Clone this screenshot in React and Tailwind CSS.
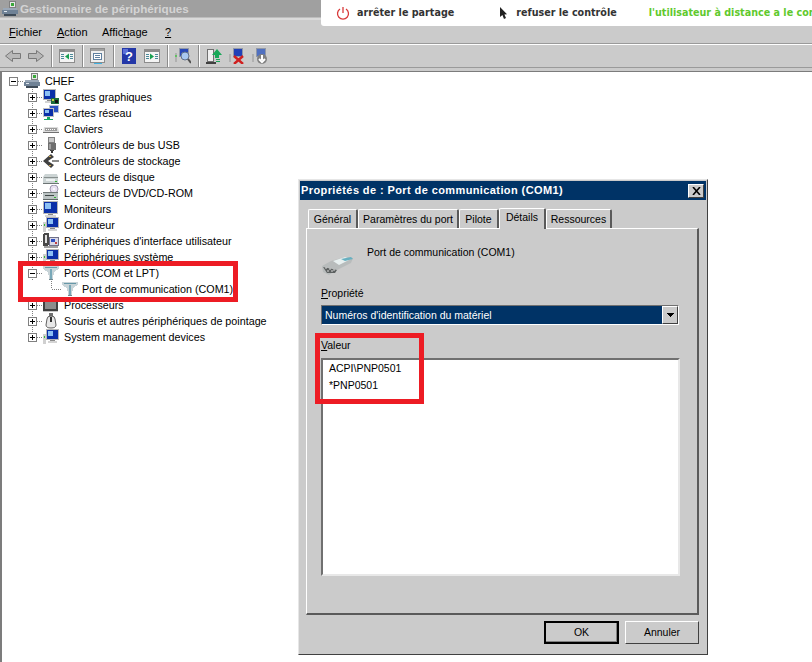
const F = { fontFamily: '"Liberation Sans", Arial, sans-serif' };

const Px = ({ children, w = 16, h = 16, className = "" }) => (
  <svg width={w} height={h} viewBox={`0 0 ${w} ${h}`} shapeRendering="crispEdges" className={`shrink-0 ${className}`}>{children}</svg>
);

const Monitor = ({ x = 2, y = 0 }) => (
  <g transform={`translate(${x} ${y})`}>
    <rect x="0" y="0" width="13" height="11" fill="#b8b8b8" />
    <rect x="1" y="1" width="11" height="9" fill="#0a2fa8" />
    <rect x="2" y="2" width="5" height="5" fill="#8cc0f4" />
    <rect x="4" y="11" width="5" height="1" fill="#8a8a8a" />
    <rect x="2" y="12" width="9" height="2" fill="#d4d4d4" />
  </g>
);

const Icons = {
  computer: () => (<Px>
    <rect x="7.5" y="0.5" width="6" height="6" fill="#e8e8e8" stroke="#808080" />
    <rect x="9" y="2" width="3" height="3" fill="#3aa83a" />
    <rect x="1" y="7" width="14" height="2" fill="#9aa8b8" />
    <rect x="0" y="9" width="16" height="4" fill="#6f8296" />
    <rect x="2" y="13" width="12" height="2" fill="#3e4b58" />
    <rect x="2" y="10" width="3" height="1" fill="#e0e8f0" />
  </Px>),
  display: () => (<Px><Monitor x={0} y={0} /><rect x="8" y="9" width="8" height="6" fill="#1c6b3a" /><rect x="9" y="10" width="2" height="2" fill="#c8d048" /><rect x="12" y="11" width="3" height="3" fill="#101010" /></Px>),
  network: () => (<Px><rect x="6" y="0" width="10" height="8" fill="#b8c4d8" /><rect x="7" y="1" width="8" height="6" fill="#2a52c0" /><rect x="0" y="3" width="11" height="9" fill="#c0c0c0" /><rect x="1" y="4" width="9" height="7" fill="#0a2fa8" /><rect x="2" y="5" width="4" height="3" fill="#8fc0f0" /><rect x="4" y="12" width="3" height="2" fill="#18a860" /><rect x="1" y="14" width="9" height="1" fill="#18a860" /></Px>),
  keyboard: () => (<Px><path d="M1 6 L15 6 L16 11 L0 11 Z" fill="#dcdcdc" shapeRendering="auto" /><rect x="2" y="7" width="12" height="3" fill="#9c9c9c" /><rect x="3" y="8" width="1" height="1" fill="#fff" /><rect x="5" y="8" width="1" height="1" fill="#fff" /><rect x="7" y="8" width="1" height="1" fill="#fff" /><rect x="9" y="8" width="1" height="1" fill="#fff" /><rect x="11" y="8" width="1" height="1" fill="#fff" /><rect x="0" y="11" width="16" height="1" fill="#707070" /></Px>),
  usb: () => (<Px><rect x="5.5" y="0.5" width="6" height="5" fill="#c8c8c8" stroke="#808080" /><rect x="5" y="6" width="8" height="7" fill="#6e6e6e" /><rect x="6" y="7" width="2" height="5" fill="#a0a0a0" /><rect x="7" y="13" width="4" height="1" fill="#444" /><rect x="8" y="14" width="2" height="2" fill="#333" /></Px>),
  storage: () => (<Px><path d="M8 1 L0 8 L8 15 L11 12 L5 8 L11 4 Z" fill="#404040" shapeRendering="auto" /><rect x="9" y="7" width="7" height="2" fill="#8a8a8a" /><rect x="6" y="3" width="2" height="1" fill="#c8a040" /><rect x="6" y="12" width="2" height="1" fill="#c8a040" /></Px>),
  disk: () => (<Px><path d="M2 5 H14 L15 8 V14 H0 V8 Z" fill="#ccd4d4" shapeRendering="auto" /><rect x="1" y="8" width="14" height="1" fill="#88908f" /><rect x="3" y="10" width="9" height="2" fill="#eef2f2" /><rect x="12" y="12" width="2" height="1" fill="#30b030" /><rect x="0" y="14" width="16" height="1" fill="#6c7474" /></Px>),
  dvd: () => (<Px><circle cx="11" cy="4" r="4" fill="#e8e0f0" stroke="#a098b0" shapeRendering="auto" /><circle cx="11" cy="4" r="1" fill="#fff" shapeRendering="auto" /><rect x="0" y="7" width="15" height="8" fill="#bcc4c4" /><rect x="0" y="7" width="15" height="1" fill="#707878" /><rect x="2" y="10" width="9" height="1" fill="#404848" /><rect x="11" y="12" width="2" height="1" fill="#30b030" /><rect x="0" y="14" width="15" height="1" fill="#606868" /></Px>),
  monitor: () => (<Px w={16} h={16}><g transform="scale(1.15)"><Monitor x={0} y={0} /></g></Px>),
  computer2: () => (<Px><rect x="0" y="5" width="3" height="10" fill="#d0d0d0" /><rect x="1" y="7" width="1" height="2" fill="#30c030" /><Monitor x={3} y={0} /></Px>),
  hid: () => (<Px><rect x="0" y="0" width="6" height="13" rx="2" fill="#484848" /><rect x="2" y="2" width="2" height="8" fill="#e0e0e0" /><rect x="6.5" y="4.5" width="9" height="8" fill="#d8d8e8" stroke="#707088" /><rect x="8" y="6" width="4" height="3" fill="#3050c0" /><rect x="12" y="9" width="2" height="2" fill="#c04040" /><rect x="1" y="13" width="14" height="2" fill="#a0a0a0" /></Px>),
  port: () => (<Px><path d="M0 1 H16 V4 L11 7 V10 H10 V14 H6 V10 H5 V7 L0 4 Z" fill="#c8d4d8" /><path d="M2 2 H14 V3 H2 Z" fill="#6898a8" /><rect x="7" y="4" width="2" height="10" fill="#78a8b8" /><rect x="6" y="14" width="4" height="1" fill="#708890" /></Px>),
  cpu: () => (<Px><rect x="0" y="0" width="15" height="15" fill="#404040" /><rect x="2" y="2" width="11" height="10" fill="#8c8c8c" /><rect x="3" y="3" width="9" height="1" fill="#b8b8b8" /><rect x="0" y="14" width="15" height="1" fill="#c8c8c8" /></Px>),
  mouse: () => (<Px><rect x="6" y="0" width="4" height="3" fill="#707070" /><path d="M4 6 Q4 3 8 3 Q12 3 12 6 L13 12 Q13 15 8 15 Q3 15 3 12 Z" fill="#e8e8e8" stroke="#606060" shapeRendering="auto" /><rect x="7" y="4" width="2" height="5" fill="#303030" /></Px>),
};

const TB = {
  back: () => (<Px><path d="M0.5 8 L7.5 2.5 V5.5 H15.5 V10.5 H7.5 V13.5 Z" fill="#b8b8b8" stroke="#787878" shapeRendering="auto" /></Px>),
  fwd: () => (<Px><path d="M15.5 8 L8.5 2.5 V5.5 H0.5 V10.5 H8.5 V13.5 Z" fill="#b8b8b8" stroke="#787878" shapeRendering="auto" /></Px>),
  pane: ({ arrow }) => (<Px><rect x="0.5" y="1.5" width="15" height="13" fill="#f4f4f4" stroke="#8c8c8c" /><rect x="1" y="2" width="14" height="2" fill="#8c8c8c" /><rect x="2" y="6" width="3" height="1" fill="#4a8a9a" /><rect x="2" y="8" width="3" height="1" fill="#4a8a9a" /><rect x="2" y="10" width="3" height="1" fill="#4a8a9a" /><rect x="11" y="6" width="3" height="1" fill="#4a8a9a" /><rect x="11" y="8" width="3" height="1" fill="#4a8a9a" /><rect x="11" y="10" width="3" height="1" fill="#4a8a9a" />{arrow === "l" ? <path d="M6 8.5 L10 5.5 V11.5 Z" fill="#18a050" shapeRendering="auto" /> : <path d="M10 8.5 L6 5.5 V11.5 Z" fill="#18a050" shapeRendering="auto" />}</Px>),
  doc: () => (<Px><rect x="0.5" y="0.5" width="14" height="14" fill="#f0f0f0" stroke="#8c8c8c" /><rect x="1" y="1" width="13" height="2" fill="#a0a0a0" /><rect x="3.5" y="5.5" width="8" height="6" fill="#fff" stroke="#6080a0" /><rect x="5" y="7" width="5" height="1" fill="#6080a0" /><rect x="5" y="9" width="5" height="1" fill="#6080a0" /><rect x="4" y="15" width="8" height="1" fill="#40b0e0" /></Px>),
  help: () => (<svg width="14" height="16" viewBox="0 0 14 16" className="shrink-0"><rect width="14" height="16" fill="#2438a8" /><rect x="1" y="1" width="5" height="5" fill="#5c70d8" /><text x="7" y="13" textAnchor="middle" fontSize="13" fontWeight="700" fill="#fff" style={F}>?</text></svg>),
  scan: () => (<Px><rect x="0" y="5" width="2" height="9" fill="#b0b0b0" /><rect x="0" y="7" width="2" height="2" fill="#60c060" /><rect x="4.5" y="0.5" width="9" height="8" fill="#2848b8" stroke="#9098a8" /><circle cx="10" cy="8" r="4" fill="#a8c8f0" stroke="#607088" shapeRendering="auto" /><path d="M13 11 L16 15" stroke="#505050" strokeWidth="2" shapeRendering="auto" /></Px>),
  update: () => (<Px><rect x="1.5" y="1.5" width="6" height="12" fill="#f0f0f0" stroke="#707070" /><rect x="0" y="14" width="10" height="2" fill="#404040" /><path d="M11 1 L16 7 H13 V10 H9 V7 H6 Z" fill="#18a858" shapeRendering="auto" /><rect x="10" y="11" width="4" height="1" fill="#18a858" /><rect x="10" y="13" width="4" height="1" fill="#18a858" /></Px>),
  remove: () => (<Px><rect x="0" y="6" width="2" height="8" fill="#b0b0b0" /><rect x="4.5" y="0.5" width="9" height="8" fill="#2040b8" stroke="#9098a8" /><path d="M5 8 L14 16 M14 8 L5 16" stroke="#d02020" strokeWidth="2.4" shapeRendering="auto" /></Px>),
  install: () => (<Px><rect x="0" y="6" width="2" height="8" fill="#b0b0b0" /><rect x="4.5" y="0.5" width="9" height="8" fill="#5070c0" stroke="#9098a8" /><circle cx="10" cy="11" r="5" fill="#808080" shapeRendering="auto" /><path d="M10 7 V12 M7 11 L10 14 L13 11" stroke="#fff" strokeWidth="2" fill="none" shapeRendering="auto" /></Px>),
};

const Conn = ({ box, top = true, bottom = true, minus, w = 19, bx = 4 }) => (
  <svg width={w} height="16" viewBox={`0 0 ${w} 16`} shapeRendering="crispEdges" className="shrink-0">
    <path d={`M${bx + 4.5} ${top ? 0 : 8}V${bottom ? 16 : 8}`} stroke="#808080" strokeDasharray="1 1" fill="none" />
    <path d={`M${bx + 5} 8.5H${w}`} stroke="#808080" strokeDasharray="1 1" fill="none" />
    {box && <>
      <rect x={bx + 0.5} y="4.5" width="8" height="8" fill="#fff" stroke="#808080" />
      <rect x={bx + 2} y="8" width="5" height="1" fill="#000" />
      {!minus && <rect x={bx + 4} y="6" width="1" height="5" fill="#000" />}
    </>}
  </svg>
);

const items = [
  ["display", "Cartes graphiques"], ["network", "Cartes réseau"], ["keyboard", "Claviers"],
  ["usb", "Contrôleurs de bus USB"], ["storage", "Contrôleurs de stockage"], ["disk", "Lecteurs de disque"],
  ["dvd", "Lecteurs de DVD/CD-ROM"], ["monitor", "Moniteurs"], ["computer2", "Ordinateur"],
  ["hid", "Périphériques d'interface utilisateur"], ["computer2", "Périphériques système"],
];
const items2 = [["cpu", "Processeurs"], ["mouse", "Souris et autres périphériques de pointage"], ["computer2", "System management devices"]];

const Row = ({ icon, label, minus, last }) => {
  const I = Icons[icon];
  return (
    <div className="flex h-4 items-center pl-[22px]">
      <Conn box minus={minus} bottom={!last} />
      <I />
      <span className="ml-[5px] whitespace-nowrap">{label}</span>
    </div>
  );
};

const Sep = () => <div className="w-[2px] h-[22px] border-l border-l-[#8c8c8c] border-r border-r-white ml-[7px] mr-[6px]" />;

const Tab = ({ label, active, w }) => (
  <div className={`relative flex items-center justify-center whitespace-nowrap border-t border-l border-white border-r-2 border-r-[#5a5a5a] rounded-t-[2px] ${active ? "h-[21px] -mb-px z-10 bg-[#cbcbcb] pb-[2px]" : "h-[19px] mt-[2px] pt-[2px]"}`} style={{ width: w }}>
    {label}
  </div>
);

export default function App() {
  return (
    <div className="relative w-[812px] h-[662px] bg-white overflow-hidden text-[11px] text-black flex flex-col" style={F}>
      {/* Main window title */}
      <div className="h-[18px] shrink-0 bg-[#a0a0a0] flex items-center pl-[2px] gap-[2px] border-b border-[#bdbdbd]">
        <Icons.computer />
        <span className="text-[11.7px] font-bold text-[#d4d4d4]">Gestionnaire de périphériques</span>
      </div>
      {/* Menu */}
      <div className="h-[26px] shrink-0 bg-[#cbcbcb] flex items-center border-t-2 border-t-[#dadada] border-b border-b-[#9a9a9a] pl-[9px] pt-[1px] text-[11px]">
        <span className="w-[48px]"><span className="underline">F</span>ichier</span>
        <span className="w-[45px]"><span className="underline">A</span>ction</span>
        <span className="w-[63px]">Affic<span className="underline">h</span>age</span>
        <span><span className="underline">?</span></span>
      </div>
      {/* Toolbar */}
      <div className="h-[24px] shrink-0 bg-[#cbcbcb] flex items-center border-t border-t-white border-b border-b-[#9a9a9a] pl-[5px]">
        <TB.back /><div className="w-[7px]" /><TB.fwd />
        <Sep /><TB.pane arrow="l" /><Sep /><TB.doc /><Sep />
        <div className="ml-[1px]" /><TB.help /><div className="w-[8px]" /><TB.pane arrow="r" /><Sep />
        <TB.scan /><Sep /><TB.update /><div className="w-[7px]" /><TB.remove /><div className="w-[7px]" /><TB.install />
      </div>
      <div className="h-[3px] shrink-0 bg-[#cbcbcb]" />
      {/* Tree */}
      <div className="flex-1 min-h-0 border-t border-l-2 border-[#7c7c7c] pt-[1px] text-[10.75px]">
        <div className="flex h-4 items-center pl-[3px]">
          <Conn box minus top={false} bottom={false} w={19} bx={4} />
          <Icons.computer />
          <span className="ml-[5px]">CHEF</span>
        </div>
        {items.map(([i, l]) => <Row key={l} icon={i} label={l} />)}
        <Row icon="port" label="Ports (COM et LPT)" minus />
        <div className="flex h-4 items-center pl-[44px]">
          <Conn top bottom={false} w={16} bx={1} />
          <Icons.port />
          <span className="ml-[4px] whitespace-nowrap">Port de communication (COM1)</span>
        </div>
        {items2.map(([i, l], n) => <Row key={l} icon={i} label={l} last={n === 2} />)}
      </div>

      {/* Sharing bar */}
      <div className="absolute top-0 right-0 left-[321px] h-[26px] bg-white rounded-bl-[3px] flex items-center text-[9.6px] font-bold text-[#333] whitespace-nowrap overflow-hidden" style={{ fontFamily: '"DejaVu Sans", Verdana, sans-serif' }}>
        <svg width="14" height="14" viewBox="0 0 14 14" className="ml-[15px] shrink-0"><path d="M4 3 A5.5 5.5 0 1 0 10 3" fill="none" stroke="#d83a3a" strokeWidth="1.3" /><path d="M7 1 V7" stroke="#d83a3a" strokeWidth="1.3" /></svg>
        <span className="ml-[7px]">arrêter le partage</span>
        <svg width="10" height="14" viewBox="0 0 10 14" className="ml-[44px] shrink-0"><path d="M2 1 V11 L4.4 9 L6 13 L8 12 L6.4 8.5 L9 8.2 Z" fill="#222" /></svg>
        <span className="ml-[8px]">refuser le contrôle</span>
        <span className="ml-[32px] text-[#5fc92d]">l'utilisateur à distance a le contrôle</span>
      </div>

      {/* Dialog */}
      <div className="absolute left-[298px] top-[179px] w-[410px] h-[476px] bg-[#cbcbcb] border border-t-[#e6e6e6] border-l-[#e6e6e6] border-r-[#404040] border-b-[#404040] flex flex-col text-[10.5px]">
        <div className="mx-[1px] mt-[1px] h-[19px] shrink-0 bg-[#003366] flex items-center justify-between pl-[1px] pr-[2px]">
          <span className="text-white font-bold text-[11px] whitespace-nowrap" style={{ letterSpacing: "0.4px" }}>Propriétés de : Port de communication (COM1)</span>
          <div className="w-[16px] h-[14px] bg-[#cbcbcb] border border-t-white border-l-white border-r-[#404040] border-b-[#404040] flex items-center justify-center">
            <svg width="9" height="8" viewBox="0 0 9 8"><path d="M1 0 L8 8 M8 0 L1 8" stroke="#000" strokeWidth="1.6" /></svg>
          </div>
        </div>
        <div className="flex pl-[9px] mt-[8px] h-[20px] shrink-0 items-end relative">
          <Tab label="Général" w={50} />
          <Tab label="Paramètres du port" w={101} />
          <Tab label="Pilote" w={40} />
          <Tab label="Détails" w={47} active />
          <Tab label="Ressources" w={66} />
        </div>
        <div className="ml-[7px] w-[393px] h-[387px] shrink-0 border border-t-white border-l-white border-r-2 border-b-2 border-r-[#5a5a5a] border-b-[#5a5a5a] flex flex-col pl-[14px]">
          <div className="flex h-[40px] mt-[16px]">
            <svg width="34" height="28" viewBox="0 0 34 28" className="mt-[4px] shrink-0">
              <path d="M1 17 L10 12 L24 8 L32 9 L30 14 L14 22 L8 26 L2 23 Z" fill="#b8bcbc" />
              <path d="M2 18 L16 21 L14 24 L6 24 Z" fill="#5c6060" />
              <path d="M4 19 H6 M8 20 H10 M12 21 H14 M6 22 H8 M10 22 H12" stroke="#d8d8d8" />
              <path d="M12 12 L24 8 L30 10 L18 16 Z" fill="#e8f0f0" />
              <path d="M20 10 L30 8 L32 10 L24 12 Z" fill="#68b0c0" />
            </svg>
            <span className="ml-[12px] h-4 whitespace-nowrap">Port de communication (COM1)</span>
          </div>
          <div className="mt-[1px] h-[17px]"><span className="underline">P</span>ropriété</div>
          <div className="mt-[2px] w-[358px] h-[20px] border border-t-[#707070] border-l-[#707070] border-r-white border-b-white bg-[#003366] text-white flex items-center justify-between">
            <span className="pl-[3px] pt-[1px] whitespace-nowrap">Numéros d'identification du matériel</span>
            <div className="w-[16px] h-[18px] bg-[#cbcbcb] border border-t-white border-l-white border-r-[#404040] border-b-[#404040] flex items-center justify-center">
              <svg width="8" height="4" viewBox="0 0 8 4" shapeRendering="crispEdges"><path d="M0 0H8L4 4Z" fill="#000" /></svg>
            </div>
          </div>
          <div className="mt-[13px] h-[20px]"><span className="underline">V</span>aleur</div>
          <div className="w-[359px] h-[218px] bg-white border-2 border-t-[#707070] border-l-[#707070] border-r-[#e8e8e8] border-b-[#e8e8e8] pl-[6px]">
            <div className="h-[17px] leading-[17px]">ACPI\PNP0501</div>
            <div className="h-[17px] leading-[17px]">*PNP0501</div>
          </div>
        </div>
        <div className="flex justify-end gap-[6px] pr-[8px] mt-[6px]">
          <div className="w-[75px] h-[23px] border-2 border-black bg-[#cbcbcb] flex items-center justify-center shadow-[inset_-1px_-1px_0_#808080]">OK</div>
          <div className="w-[74px] h-[23px] border border-t-white border-l-white border-r-[#404040] border-b-[#404040] flex items-center justify-center">Annuler</div>
        </div>
      </div>

      {/* Red highlight frames */}
      <div className="absolute left-[18px] top-[261px] w-[220px] h-[41px] border-[5px] border-[#ed1c24]" />
      <div className="absolute left-[315px] top-[333px] w-[109px] h-[71px] border-[5px] border-[#ed1c24]" />
    </div>
  );
}
